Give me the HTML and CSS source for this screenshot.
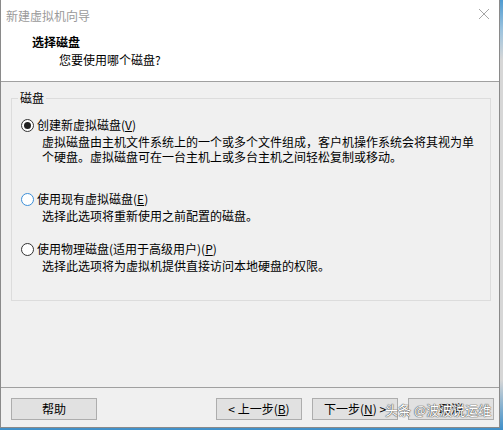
FILE: index.html
```html
<!DOCTYPE html>
<html lang="zh-CN">
<head>
    <meta charset="UTF-8">
    <title>新建虚拟机向导</title>
    <link rel="stylesheet" href="styles.css">
</head>
<body>
    <div class="dialog">
        <div class="titlebar">
            <span class="title">新建虚拟机向导</span>
            <svg class="close" width="12" height="12" viewBox="0 0 12 12">
                <path d="M1 1 L11 11 M11 1 L1 11" stroke="#a6a6a6" stroke-width="1" fill="none"/>
            </svg>
        </div>

        <div class="header">
            <div class="header-title">选择磁盘</div>
            <div class="header-sub">您要使用哪个磁盘?</div>
        </div>

        <div class="content">
            <fieldset class="group">
                <legend>磁盘</legend>

                <div class="option">
                    <label class="radio-line"><span class="radio checked"></span>创建新虚拟磁盘(<u>V</u>)</label>
                    <p class="desc">虚拟磁盘由主机文件系统上的一个或多个文件组成，客户机操作系统会将其视为单个硬盘。虚拟磁盘可在一台主机上或多台主机之间轻松复制或移动。</p>
                </div>

                <div class="option">
                    <label class="radio-line"><span class="radio focus"></span>使用现有虚拟磁盘(<u>E</u>)</label>
                    <p class="desc">选择此选项将重新使用之前配置的磁盘。</p>
                </div>

                <div class="option">
                    <label class="radio-line"><span class="radio"></span>使用物理磁盘(适用于高级用户)(<u>P</u>)</label>
                    <p class="desc">选择此选项将为虚拟机提供直接访问本地硬盘的权限。</p>
                </div>
            </fieldset>
        </div>

        <div class="footer">
            <button class="btn">帮助</button>
            <div class="nav">
                <button class="btn">&lt; 上一步(<u>B</u>)</button>
                <button class="btn">下一步(<u>N</u>) &gt;</button>
                <button class="btn">取消</button>
            </div>
        </div>

        <div class="watermark">头条 @波波说运维</div>
    </div>
</body>
</html>
```

FILE: styles.css
```css
html, body {
    margin: 0;
    padding: 0;
}
body {
    width: 503px;
    height: 430px;
    overflow: hidden;
    background: linear-gradient(#4f9bd1 0, #9cc3de 30px, #d6d6d6 60px, #d6d6d6 380px, #3e8fc9 430px);
    font-family: "Noto Sans CJK SC", "Microsoft YaHei", sans-serif;
    font-size: 12px;
    color: #000;
}
.dialog {
    position: relative;
    width: 498px;
    height: 427px;
    background: #f0f0f0;
    border-left: 1px solid #8a8a8a;
    border-right: 1px solid #8a8a8a;
    border-bottom: 1px solid #8a8a8a;
    display: flex;
    flex-direction: column;
}
.titlebar {
    height: 30px;
    background: #fff;
    display: flex;
    align-items: center;
    justify-content: space-between;
    padding: 0 9px 0 5px;
}
.title {
    color: #9a9a9a;
    font-size: 12px;
}
.close {
    margin-top: -2px;
}
.header {
    height: 52px;
    background: #fff;
    border-bottom: 1px solid #a0a0a0;
    padding-left: 31px;
    box-sizing: border-box;
}
.header-title {
    font-weight: bold;
    line-height: 16px;
    padding-top: 4px;
}
.header-sub {
    padding-left: 27px;
    line-height: 16px;
    margin-top: 2px;
}
.content {
    flex: 1;
    padding: 9px 8px 0 10px;
    border-bottom: 1px solid #a0a0a0;
}
.group {
    margin: 0;
    height: 210px;
    box-sizing: border-box;
    border: 1px solid #dcdcdc;
    padding: 12px 0 0 9px;
}
.group legend {
    padding: 0 2px;
    margin-left: -3px;
    line-height: 14px;
}
.option {
    margin-bottom: 18px;
}
.option:first-of-type {
    margin-bottom: 27px;
}
.radio-line {
    display: flex;
    align-items: center;
    line-height: 16px;
}
.radio {
    width: 11px;
    height: 11px;
    border: 1px solid #333;
    border-radius: 50%;
    background: #fff;
    margin-right: 3px;
    position: relative;
    flex: none;
}
.radio.checked::after {
    content: "";
    position: absolute;
    left: 2px;
    top: 2px;
    width: 7px;
    height: 7px;
    border-radius: 50%;
    background: #222;
}
.radio.focus {
    border-color: #3c8fd8;
}
.desc {
    margin: 1px 0 0 21px;
    line-height: 15px;
    width: 432px;
}
.footer {
    height: 39px;
    display: flex;
    align-items: center;
    justify-content: space-between;
    padding: 0 5px 0 10px;
}
.nav {
    display: flex;
    gap: 10px;
}
.btn {
    width: 86px;
    height: 22px;
    margin-top: 2px;
    background: #e1e1e1;
    border: 1px solid #adadad;
    font-family: inherit;
    font-size: 12px;
    padding: 0;
    color: #000;
}
.watermark {
    position: absolute;
    left: 384px;
    top: 402px;
    font-size: 13px;
    line-height: 16px;
    color: #fff;
    text-shadow: 0 0 1px #555, 0 0 1px #555, 0 0 1px #555;
}
```
